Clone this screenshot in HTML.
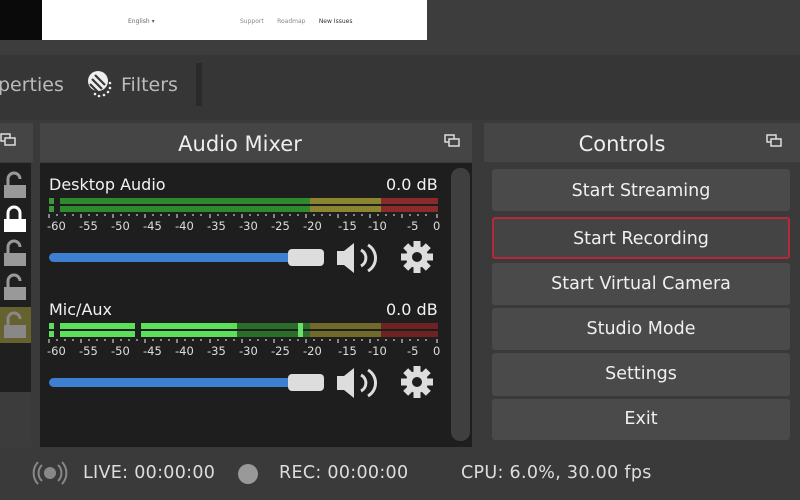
<!DOCTYPE html><html><head><style>
*{margin:0;padding:0;box-sizing:border-box}
body{width:800px;height:500px;background:#3a3a3a;position:relative;overflow:hidden;font-family:"DejaVu Sans","Liberation Sans",sans-serif;color:#e8e8e8}
.a{position:absolute}
.btn{position:absolute;left:492px;width:298px;background:#4a4a4a;border-radius:3px;font-size:17.5px;text-align:center;color:#f0f0f0}
.hdr{position:absolute;background:#454545;font-size:21px;text-align:center;color:#eee}
.t{font-size:16px;color:#f2f2f2}
.st{font-size:17.5px;color:#ddd;letter-spacing:0.3px}
</style></head><body>
<div class="a" style="left:0;top:0;width:42px;height:40px;background:#0a0a0a"></div>
<div class="a" style="left:42px;top:0;width:385px;height:40px;background:#fff"></div>
<div class="a" style="left:128px;top:18px;font-size:6px;color:#666">English ▾</div>
<div class="a" style="left:240px;top:18px;font-size:6px;color:#888">Support &nbsp;&nbsp;&nbsp;&nbsp;&nbsp; Roadmap &nbsp;&nbsp;&nbsp;&nbsp;&nbsp; <span style="color:#333">New Issues</span></div>
<div class="a" style="left:427px;top:0;width:373px;height:55px;background:#3d3d3d"></div>
<div class="a" style="left:0;top:40px;width:427px;height:15px;background:#3d3d3d"></div>
<div class="a" style="left:0;top:55px;width:800px;height:65px;background:#363636"></div>
<div class="a" style="left:-2px;top:74px;font-size:19px;color:#bbb">perties</div>
<svg class="a" style="left:86px;top:69px" width="32" height="32" viewBox="0 0 32 32"><circle cx="12" cy="12" r="10" fill="#eee"/><g stroke="#363636" stroke-width="2.2"><line x1="6" y1="10" x2="16" y2="20"/><line x1="9" y1="6" x2="19" y2="16"/><line x1="4" y1="15" x2="12" y2="23"/></g><g fill="#eee"><circle cx="24" cy="14" r="1.3"/><circle cx="24" cy="19" r="1.3"/><circle cx="22" cy="23" r="1.3"/><circle cx="18" cy="26" r="1.3"/><circle cx="13" cy="27" r="1.3"/><circle cx="9" cy="25" r="1.3"/></g></svg>
<div class="a" style="left:121px;top:74px;font-size:19px;color:#bbb">Filters</div>
<div class="a" style="left:196px;top:63px;width:6px;height:43px;background:#2a2a2a"></div>

<div class="hdr" style="left:0;top:123px;width:33px;height:39px"></div>
<div class="a" style="left:0;top:163px;width:31px;height:229px;background:#1f1f1f"></div>
<div class="a" style="left:0;top:307px;width:31px;height:36px;background:#66622f"></div>
<div class="a" style="left:0;top:392px;width:31px;height:55px;background:#3c3c3c"></div>
<svg class="a" style="left:0;top:130px" width="20" height="20"><rect x="1" y="4" width="9" height="7" fill="none" stroke="#ddd" stroke-width="1.5"/><rect x="5" y="8" width="10" height="7" fill="#454545" stroke="#ddd" stroke-width="1.5"/></svg>
<svg class="a" style="left:0;top:165px" width="30" height="180">
<g fill="none" stroke-width="3"><path d="M8 20V14a6 6 0 0 1 12 0" stroke="#999"/><path d="M8 54V48a6 6 0 0 1 12 0v6" stroke="#fff"/><path d="M8 88V82a6 6 0 0 1 12 0" stroke="#999"/><path d="M8 122V116a6 6 0 0 1 12 0" stroke="#999"/><path d="M8 160V154a6 6 0 0 1 12 0" stroke="#888"/></g>
<rect x="4" y="20" width="22" height="13" fill="#999"/><rect x="4" y="54" width="22" height="13" fill="#fff"/><rect x="4" y="88" width="22" height="13" fill="#999"/><rect x="4" y="122" width="22" height="13" fill="#999"/><rect x="4" y="160" width="22" height="13" fill="#888"/></svg>

<div class="hdr" style="left:40px;top:123px;width:432px;height:39px;line-height:43px;padding-right:32px">Audio Mixer</div>
<svg class="a" style="left:444px;top:133px" width="20" height="20"><rect x="1" y="2" width="9" height="7" fill="none" stroke="#ddd" stroke-width="1.5"/><rect x="5" y="6" width="10" height="7" fill="#454545" stroke="#ddd" stroke-width="1.5"/></svg>
<div class="a" style="left:40px;top:163px;width:432px;height:284px;background:#1e1e1e"></div>
<div class="a" style="left:451px;top:168px;width:19px;height:273px;background:#3f3f3f;border-radius:9px"></div>
<div class="a t" style="left:49px;top:175px">Desktop Audio</div>
<div class="a t" style="left:386px;top:175px">0.0 dB</div>
<div class="a t" style="left:49px;top:300px">Mic/Aux</div>
<div class="a t" style="left:386px;top:300px">0.0 dB</div>

<svg class="a" style="left:40px;top:190px" width="410" height="250" font-family="DejaVu Sans" font-size="11.5" fill="#ddd">
<defs>
<g id="tk" stroke="#ccc" stroke-width="1.2"><path d="M9 24v4M17 24v2M25 24v2M33 24v2M41 24v4M49 24v2M57 24v2M65 24v2M73 24v4M81 24v2M89 24v2M97 24v2M105 24v4M113 24v2M121 24v2M129 24v2M137 24v4M145 24v2M153 24v2M161 24v2M170 24v4M178 24v2M186 24v2M194 24v2M202 24v4M210 24v2M218 24v2M226 24v2M234 24v4M242 24v2M250 24v2M258 24v2M266 24v4M274 24v2M282 24v2M290 24v2M298 24v4M306 24v2M314 24v2M322 24v2M330 24v4M338 24v2M346 24v2M354 24v2M362 24v4M370 24v2M378 24v2M386 24v2M397 24v4"/></g>
<g id="lb"><text x="7" y="40">-60</text><text x="39" y="40">-55</text><text x="71" y="40">-50</text><text x="103" y="40">-45</text><text x="135" y="40">-40</text><text x="167" y="40">-35</text><text x="199" y="40">-30</text><text x="231" y="40">-25</text><text x="263" y="40">-20</text><text x="298" y="40">-15</text><text x="328" y="40">-10</text><text x="367" y="40">-5</text><text x="393" y="40">0</text></g>
<g id="sl"><rect x="9" y="63" width="245" height="9" rx="4.5" fill="#3d7fd0"/><rect x="248" y="59" width="36" height="17" rx="4" fill="#ddd"/><path d="M297 61h7l10-8v30l-10-8h-7z" fill="#ddd"/><path d="M321 60a9 9 0 0 1 0 16M328 55a15 15 0 0 1 0 26" stroke="#ddd" stroke-width="3" fill="none"/><g transform="translate(377 67)"><circle r="11" fill="#ddd"/><g fill="#ddd"><rect x="-3.5" y="-16" width="7" height="32"/><rect x="-3.5" y="-16" width="7" height="32" transform="rotate(45)"/><rect x="-3.5" y="-16" width="7" height="32" transform="rotate(90)"/><rect x="-3.5" y="-16" width="7" height="32" transform="rotate(135)"/></g><circle r="5" fill="#1e1e1e"/></g></g>
</defs>
<g><rect x="9" y="8" width="5" height="6" fill="#3a9a3a"/><rect x="9" y="16" width="5" height="6" fill="#3a9a3a"/>
<rect x="20" y="8" width="250" height="6" fill="#2f8a2f"/><rect x="20" y="16" width="250" height="6" fill="#2f8a2f"/>
<rect x="270" y="8" width="71" height="6" fill="#8a8530"/><rect x="270" y="16" width="71" height="6" fill="#8a8530"/>
<rect x="341" y="8" width="57" height="6" fill="#8a2a2a"/><rect x="341" y="16" width="57" height="6" fill="#8a2a2a"/></g>
<use href="#tk"/><use href="#lb"/><use href="#sl"/>
<g transform="translate(0 125)">
<rect x="9" y="8" width="5" height="6" fill="#5ce05c"/><rect x="9" y="16" width="5" height="6" fill="#5ce05c"/>
<rect x="20" y="8" width="75" height="6" fill="#5ce05c"/><rect x="20" y="16" width="75" height="6" fill="#5ce05c"/>
<rect x="101" y="8" width="96" height="6" fill="#5ce05c"/><rect x="101" y="16" width="96" height="6" fill="#5ce05c"/>
<rect x="197" y="8" width="73" height="6" fill="#2a6e2a"/><rect x="197" y="16" width="73" height="6" fill="#2a6e2a"/>
<rect x="258" y="8" width="5" height="14" fill="#6ae06a"/>
<rect x="270" y="8" width="71" height="6" fill="#716a2a"/><rect x="270" y="16" width="71" height="6" fill="#716a2a"/>
<rect x="341" y="8" width="57" height="6" fill="#6e2222"/><rect x="341" y="16" width="57" height="6" fill="#6e2222"/>
<use href="#tk"/><use href="#lb"/><use href="#sl"/></g>
</svg>

<div class="hdr" style="left:484px;top:123px;width:316px;height:39px;line-height:43px;padding-right:40px">Controls</div>
<svg class="a" style="left:766px;top:133px" width="20" height="20"><rect x="1" y="2" width="9" height="7" fill="none" stroke="#ddd" stroke-width="1.5"/><rect x="5" y="6" width="10" height="7" fill="#454545" stroke="#ddd" stroke-width="1.5"/></svg>
<div class="btn" style="top:169px;height:42px;line-height:44px">Start Streaming</div>
<div class="btn" style="top:217px;height:42px;line-height:40px;border:2px solid #b8283a;background:#444">Start Recording</div>
<div class="btn" style="top:263px;height:42px;line-height:42px">Start Virtual Camera</div>
<div class="btn" style="top:308px;height:42px;line-height:42px">Studio Mode</div>
<div class="btn" style="top:353px;height:43px;line-height:43px">Settings</div>
<div class="btn" style="top:399px;height:41px;line-height:41px">Exit</div>

<svg class="a" style="left:31px;top:459px" width="40" height="28"><circle cx="19" cy="14" r="6" fill="#888"/><path d="M11 6a11 11 0 0 0 0 16M27 6a11 11 0 0 1 0 16M7 3a16 16 0 0 0 0 22M31 3a16 16 0 0 1 0 22" stroke="#888" stroke-width="2" fill="none"/></svg>
<div class="a st" style="left:83px;top:463px">LIVE: 00:00:00</div>
<div class="a" style="left:238px;top:464px;width:20px;height:20px;border-radius:50%;background:#999"></div>
<div class="a st" style="left:279px;top:463px">REC: 00:00:00</div>
<div class="a st" style="left:461px;top:463px">CPU: 6.0%, 30.00 fps</div>
</body></html>
